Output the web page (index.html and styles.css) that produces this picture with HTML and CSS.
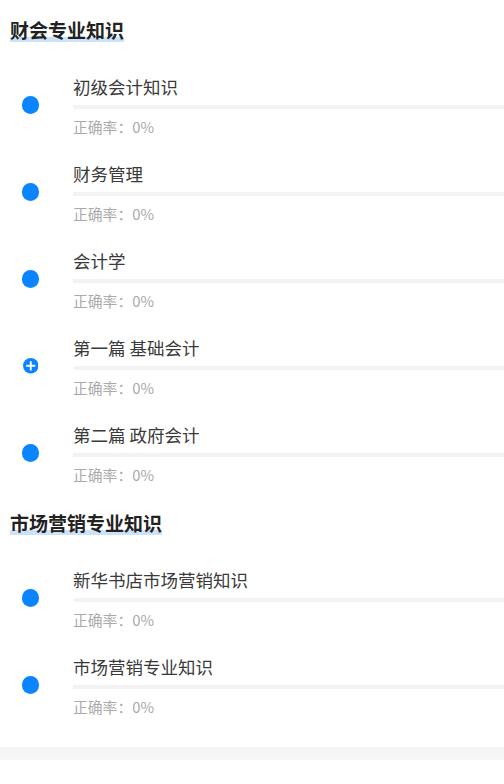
FILE: index.html
```html
<!DOCTYPE html>
<html lang="zh-CN">
<head>
    <meta charset="UTF-8">
    <meta name="viewport" content="width=device-width, initial-scale=1.0">
    <title>知识点练习</title>
    <link rel="stylesheet" href="styles.css">
</head>
<body>

<div class="page">
    <div class="section">
        <div class="section-head"><span class="section-title">财会专业知识</span></div>

        <div class="item">
            <div class="item-icon"><span class="dot"></span></div>
            <div class="item-body">
                <div class="item-title">初级会计知识</div>
                <div class="item-bar"></div>
                <div class="item-rate">正确率：0%</div>
            </div>
        </div>

        <div class="item">
            <div class="item-icon"><span class="dot"></span></div>
            <div class="item-body">
                <div class="item-title">财务管理</div>
                <div class="item-bar"></div>
                <div class="item-rate">正确率：0%</div>
            </div>
        </div>

        <div class="item">
            <div class="item-icon"><span class="dot"></span></div>
            <div class="item-body">
                <div class="item-title">会计学</div>
                <div class="item-bar"></div>
                <div class="item-rate">正确率：0%</div>
            </div>
        </div>

        <div class="item">
            <div class="item-icon">
                <svg class="plus" viewBox="0 0 20 20">
                    <circle cx="10" cy="10" r="10" fill="#0a84ff"/>
                    <path d="M10 5v10M5 10h10" stroke="#fff" stroke-width="2.4" stroke-linecap="round"/>
                </svg>
            </div>
            <div class="item-body">
                <div class="item-title">第一篇 基础会计</div>
                <div class="item-bar"></div>
                <div class="item-rate">正确率：0%</div>
            </div>
        </div>

        <div class="item">
            <div class="item-icon"><span class="dot"></span></div>
            <div class="item-body">
                <div class="item-title">第二篇 政府会计</div>
                <div class="item-bar"></div>
                <div class="item-rate">正确率：0%</div>
            </div>
        </div>
    </div>

    <div class="section">
        <div class="section-head"><span class="section-title">市场营销专业知识</span></div>

        <div class="item">
            <div class="item-icon"><span class="dot"></span></div>
            <div class="item-body">
                <div class="item-title">新华书店市场营销知识</div>
                <div class="item-bar"></div>
                <div class="item-rate">正确率：0%</div>
            </div>
        </div>

        <div class="item">
            <div class="item-icon"><span class="dot"></span></div>
            <div class="item-body">
                <div class="item-title">市场营销专业知识</div>
                <div class="item-bar"></div>
                <div class="item-rate">正确率：0%</div>
            </div>
        </div>
    </div>

    <div class="footer-band"></div>
</div>

</body>
</html>
```

FILE: styles.css
```css
body {
    margin: 0;
    background-color: #fff;
    font-family: "Noto Sans CJK SC", "Noto Sans", sans-serif;
    color: #333;
}

.page {
    padding-top: 10px;
}

.section-head {
    height: 58px;
    box-sizing: border-box;
    padding: 7px 0 0 10px;
}

.section-title {
    display: inline-block;
    font-size: 19px;
    font-weight: bold;
    line-height: 26px;
    color: #222;
    background: linear-gradient(transparent 20px, #cbe2fa 20px, #cbe2fa 25px, transparent 25px);
}

.item {
    display: flex;
    height: 87px;
}

.item-icon {
    width: 61px;
    height: 74px;
    flex-shrink: 0;
    display: flex;
    justify-content: center;
    align-items: center;
}

.dot {
    width: 17.5px;
    height: 17.5px;
    border-radius: 50%;
    background-color: #0a84ff;
}

.plus {
    width: 15.5px;
    height: 15.5px;
}

.item-body {
    flex: 1;
    margin-left: 12px;
    padding-top: 7px;
}

.item-title {
    font-size: 17.5px;
    line-height: 24px;
    color: #3a3a3a;
}

.item-bar {
    height: 4px;
    margin-top: 6px;
    background-color: #f3f3f3;
}

.item-rate {
    margin-top: 8px;
    font-size: 14.8px;
    line-height: 20px;
    color: #aaa;
}

.footer-band {
    height: 13px;
    margin-top: 12px;
    background: linear-gradient(#f3f3f3, #f8f8f8);
}
```
